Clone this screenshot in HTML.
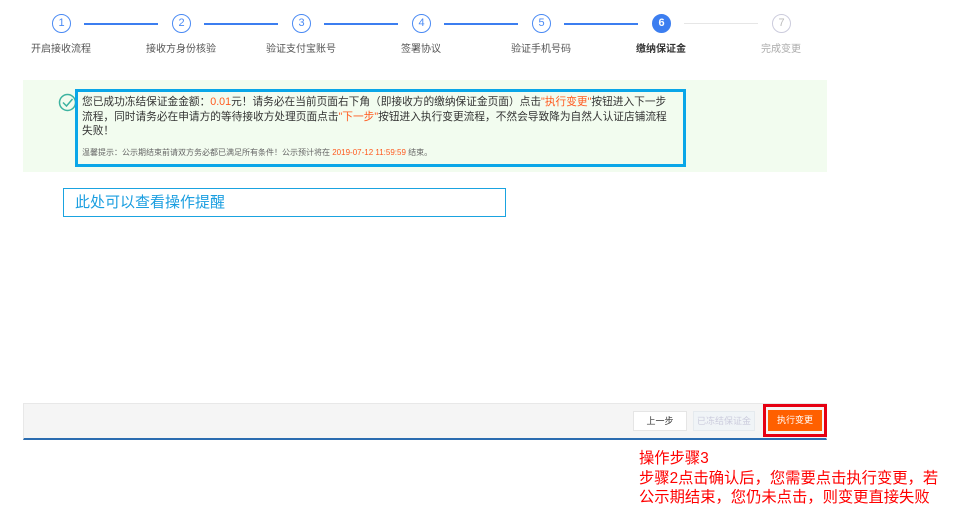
<!DOCTYPE html>
<html><head><meta charset="utf-8"><style>
*{margin:0;padding:0;box-sizing:border-box}
body{width:962px;height:516px;background:#fff;position:relative;overflow:hidden;font-family:"Liberation Sans","Noto Sans CJK SC",sans-serif}
.a{position:absolute}
.c{position:absolute;width:19px;height:19px;border-radius:50%;border:1px solid #4a8af4;color:#4a8af4;font-size:11px;text-align:center;line-height:17px;background:#fff}
.l{position:absolute;height:2px;background:#3c7ef0;top:23px}
.t{position:absolute;top:40px;font-size:10px;color:#555;width:120px;text-align:center}
.o{color:#ff5a1f}
</style></head><body>
<div class="l" style="left:84px;width:74px"></div>
<div class="l" style="left:204px;width:74px"></div>
<div class="l" style="left:324px;width:74px"></div>
<div class="l" style="left:444px;width:74px"></div>
<div class="l" style="left:564px;width:74px"></div>
<div class="l" style="left:684px;width:74px;height:1px;background:#e6e6e6"></div>
<div class="c" style="left:52px;top:14px">1</div>
<div class="c" style="left:172px;top:14px">2</div>
<div class="c" style="left:292px;top:14px">3</div>
<div class="c" style="left:412px;top:14px">4</div>
<div class="c" style="left:532px;top:14px">5</div>
<div class="c" style="left:652px;top:14px;background:#3c7ef0;color:#fff;border-color:#3c7ef0;font-weight:bold">6</div>
<div class="c" style="left:772px;top:14px;border-color:#ccd;color:#bbb">7</div>
<div class="t" style="left:1px">开启接收流程</div>
<div class="t" style="left:121px">接收方身份核验</div>
<div class="t" style="left:241px">验证支付宝账号</div>
<div class="t" style="left:361px">签署协议</div>
<div class="t" style="left:481px">验证手机号码</div>
<div class="t" style="left:601px;font-weight:bold;color:#333">缴纳保证金</div>
<div class="t" style="left:721px;color:#aaa">完成变更</div>

<div class="a" style="left:23px;top:80px;width:804px;height:92px;background:#f2fcef"></div>
<svg class="a" style="left:58px;top:93px" width="19" height="19"><circle cx="9.5" cy="9.5" r="8" fill="none" stroke="#3cb3a0" stroke-width="1.5"/><path d="M5 9.5l3.5 3.5 6-7" fill="none" stroke="#3cb3a0" stroke-width="1.5"/></svg>
<div class="a" style="left:75px;top:89px;width:611px;height:78px;border:3px solid #0aa6e8"></div>
<div class="a" style="left:82px;top:95px;font-size:10.7px;line-height:14.5px;color:#333;white-space:nowrap">您已成功冻结保证金金额：<span class="o">0.01</span>元！请务必在当前页面右下角（即接收方的缴纳保证金页面）点击<span class="o">"执行变更"</span>按钮进入下一步<br>流程，同时请务必在申请方的等待接收方处理页面点击<span class="o">"下一步"</span>按钮进入执行变更流程，不然会导致降为自然人认证店铺流程<br>失败！</div>
<div class="a" style="left:82px;top:147px;font-size:8px;color:#666;white-space:nowrap">温馨提示：公示期结束前请双方务必都已满足所有条件！公示预计将在 <span class="o">2019-07-12 11:59:59</span> 结束。</div>

<div class="a" style="left:63px;top:188px;width:443px;height:29px;border:1px solid #1aa3e0;color:#1a9ee0;font-size:15px;line-height:27px;padding-left:11px">此处可以查看操作提醒</div>

<div class="a" style="left:23px;top:403px;width:804px;height:37px;background:#f5f5f5;border:1px solid #e8e8e8;border-bottom:2px solid #2b6cb0"></div>
<div class="a" style="left:633px;top:411px;width:54px;height:20px;background:#fff;border:1px solid #e5e5e5;font-size:9px;text-align:center;line-height:18px;color:#333">上一步</div>
<div class="a" style="left:693px;top:411px;width:62px;height:20px;background:#f0f4f7;border:1px solid #e5eaee;font-size:9px;text-align:center;line-height:18px;color:#ccd">已冻结保证金</div>
<div class="a" style="left:763px;top:404px;width:64px;height:33px;border:3px solid #e60012"></div>
<div class="a" style="left:768px;top:410px;width:54px;height:21px;background:#ff6000;font-size:9px;text-align:center;line-height:21px;color:#fff">执行变更</div>

<div class="a" style="left:639px;top:449px;font-size:15.3px;line-height:19.5px;color:#f00;white-space:nowrap">操作步骤3<br>步骤2点击确认后，您需要点击执行变更，若<br>公示期结束，您仍未点击，则变更直接失败</div>
</body></html>
